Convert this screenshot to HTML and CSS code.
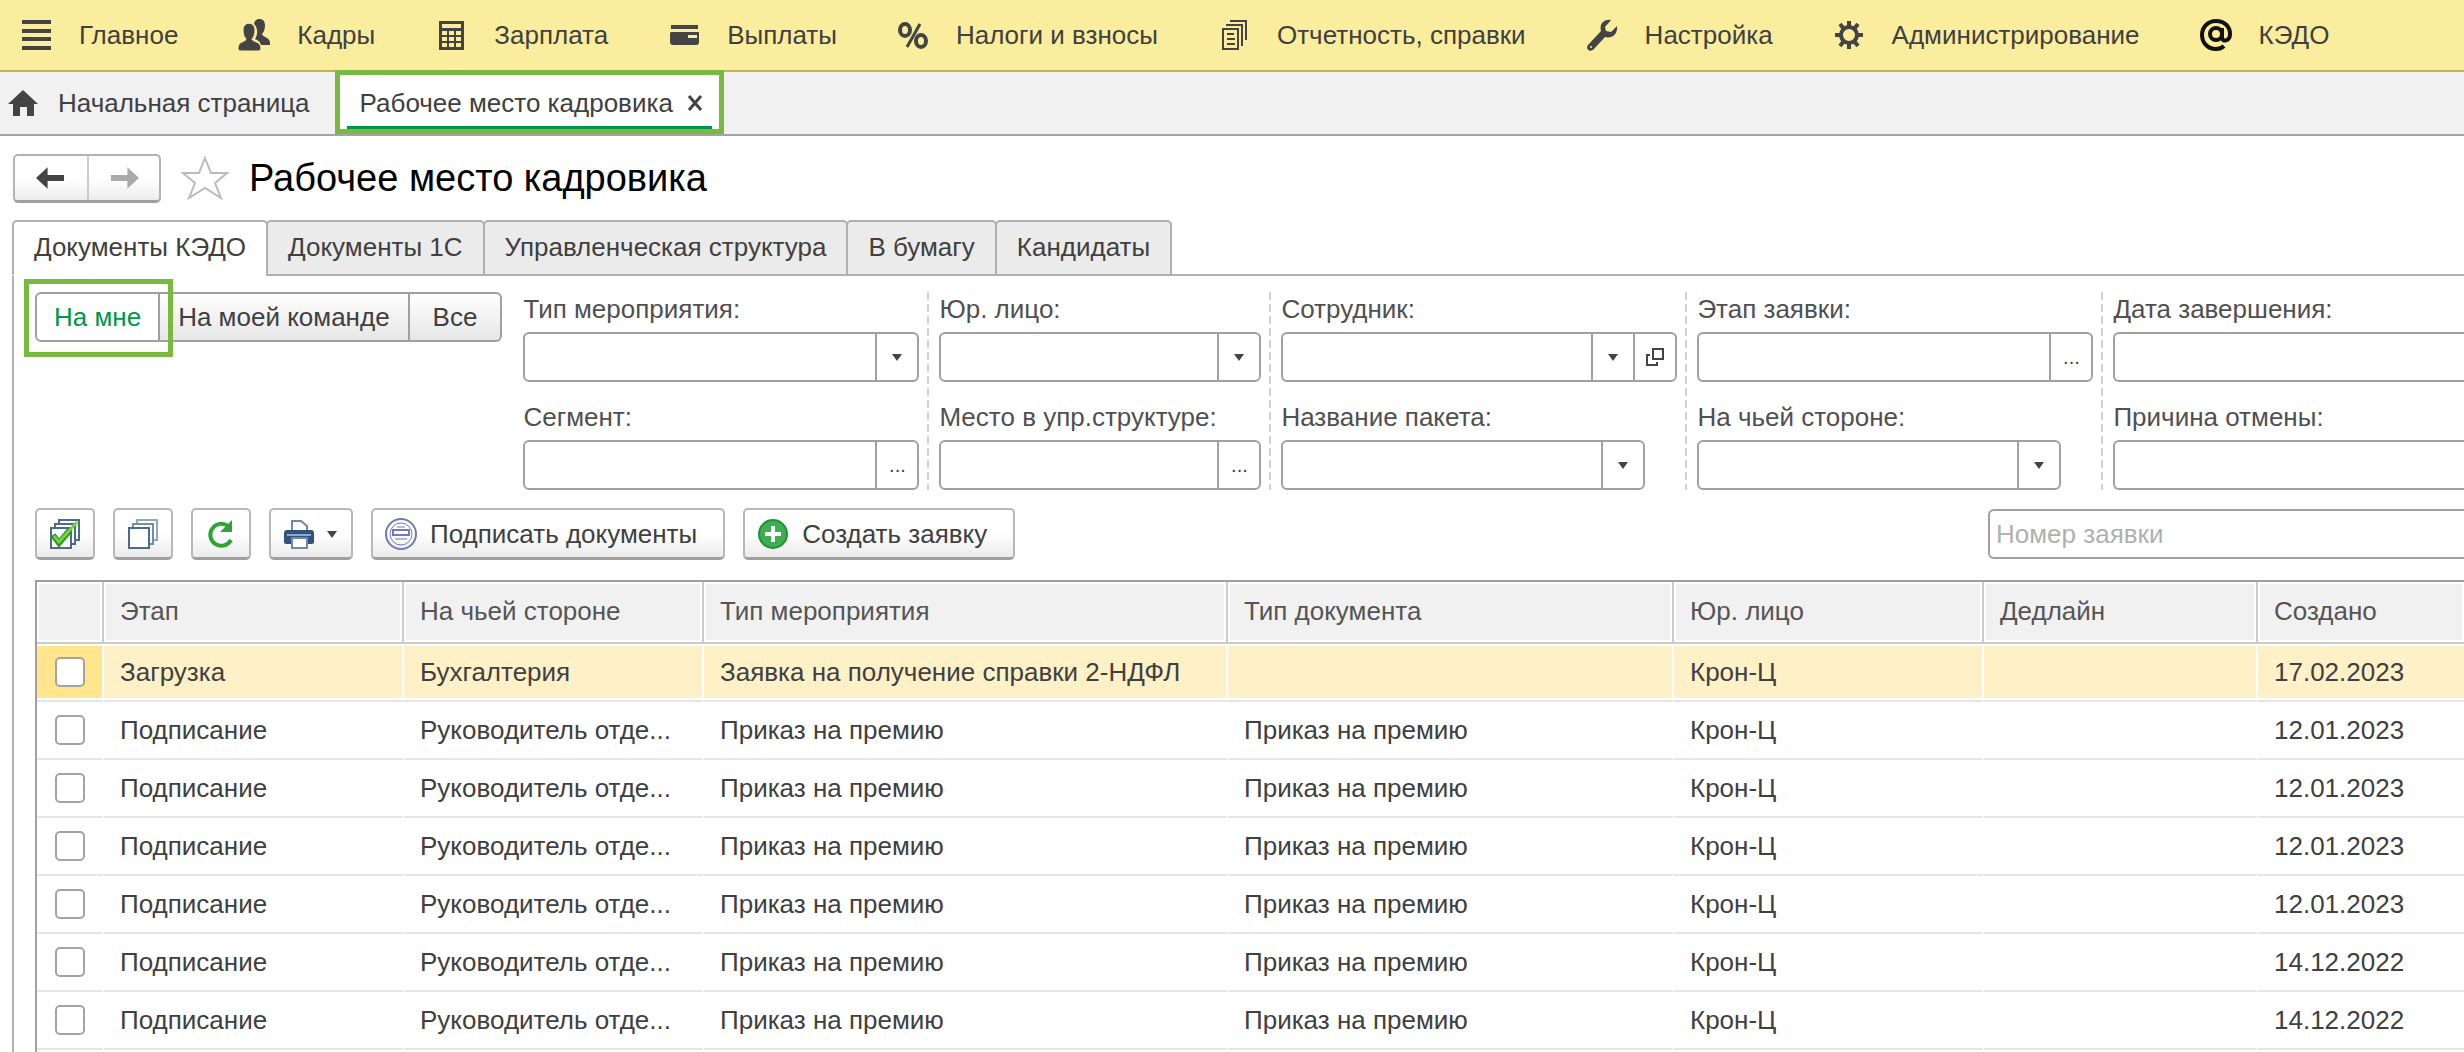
FILE: index.html
```html
<!DOCTYPE html>
<html lang="ru">
<head>
    <meta charset="UTF-8">
    <meta name="viewport" content="width=device-width, initial-scale=1.0">
    <title>Рабочее место кадровика</title>
    <link rel="stylesheet" href="styles.css">
</head>
<body>

<nav class="sections">
    <a href="#main">
        <svg viewBox="0 0 32 32"><path d="M2 3h29M2 12h29M2 20h29M2 29h29" stroke="#444" stroke-width="4"/></svg>
        Главное
    </a>
    <a href="#staff">
        <svg viewBox="0 0 32 32" fill="#444"><path d="M16 5c1-7 11-7 11 1 0 4-1 7-3 9 0 3 8 3 8 9v2h-9c-1-4-4-5-6-6 2-3 4-10-1-15z"/><path d="M5 11c0-9 12-9 12 0 0 4-1 7-3 9 0 3 9 2 9 9 0 2-1 3-3 3H3c-2 0-3-1-3-3 0-7 8-6 8-9-2-2-3-5-3-9z" stroke="#fbed9e"/></svg>
        Кадры
    </a>
    <a href="#salary">
        <svg viewBox="0 0 32 32"><path d="M4 2h25v29H4z" fill="#444"/><path d="M7 5h19v4H7zM7 12h5v4H7zM14 12h5v4h-5zM21 12h5v4h-5zM7 18h5v4H7zM14 18h5v4h-5zM21 18h5v4h-5zM7 24h5v4H7zM14 24h5v4h-5zM21 24h5v4h-5z" fill="#fbed9e"/></svg>
        Зарплата
    </a>
    <a href="#payments">
        <svg viewBox="0 0 32 32"><path d="M3 6h27v4H3zM3 13h28v10c0 2-1 3-3 3H5c-2 0-3-1-3-3v-9z" fill="#444"/><path d="M20 16h9v3h-9z" fill="#fbed9e"/></svg>
        Выплаты
    </a>
    <a href="#taxes">
        <svg viewBox="0 0 32 32" fill="none" stroke="#444"><ellipse cx="8" cy="11" rx="5" ry="6" stroke-width="4"/><ellipse cx="24" cy="22" rx="5" ry="6" stroke-width="4"/><path d="M23 5L10 28" stroke-width="3"/></svg>
        Налоги и взносы
    </a>
    <a href="#reports">
        <svg viewBox="0 0 32 32" fill="none" stroke="#444" stroke-width="2"><path d="M5 10h15v20H5zM8 6h16v21M12 2h16v19"/><path d="M9 15h4M9 20h8M9 25h8M9 15h7"/></svg>
        Отчетность, справки
    </a>
    <a href="#settings">
        <svg viewBox="0 0 32 32"><path d="M25 1c-7-1-12 4-10 11L2 26c-3 4 2 8 6 4l11-12c7 2 13-3 12-11l-6 6-5-1-1-4z" fill="#444"/><circle cx="5" cy="28" r="1" fill="#fbed9e"/></svg>
        Настройка
    </a>
    <a href="#admin">
        <svg viewBox="0 0 32 32" fill="none" stroke="#444"><circle cx="16" cy="16" r="8" stroke-width="4"/><path d="M16 2v6M16 24v6M2 16h6M24 16h6M7 5l4 5M25 5l-4 5M7 27l4-5M25 27l-4-5" stroke-width="4"/></svg>
        Администрирование
    </a>
    <a href="#kedo">
        <svg viewBox="0 0 32 32" fill="none" stroke="#111" stroke-width="4"><circle cx="16" cy="15" r="6"/><path d="M22 9v9c0 6 8 4 8-3C30 7 24 2 16 2S2 8 2 16s6 14 14 14c3 0 6-1 8-3"/></svg>
        КЭДО
    </a>
</nav>

<div class="windows">
    <a class="window-tab" href="#home">
        <svg class="home" viewBox="0 0 30 26"><path d="M15 0l15 14h-4v12h-7v-9h-7v9H5V14H0z" fill="#444"/></svg>
        Начальная страница
    </a>
    <div class="window-tab current">
        <span>Рабочее место кадровика</span>
        <button class="close" aria-label="Закрыть">
            <svg viewBox="0 0 16 16"><path d="M2 1l12 14M14 1L2 15" stroke="#444" stroke-width="3"/></svg>
        </button>
    </div>
</div>

<header class="title-bar">
    <div class="history">
        <button aria-label="Назад"><svg viewBox="0 0 30 22"><path d="M0 11L12 0v8h17v6H12v8z" fill="#444"/></svg></button>
        <button aria-label="Вперед"><svg viewBox="0 0 30 22"><path d="M30 11L18 0v8H1v6h17v8z" fill="#aaa"/></svg></button>
    </div>
    <button class="favorite" aria-label="Избранное">
        <svg viewBox="0 0 48 44"><path d="M24 2l6 15h16L34 27l6 15-16-10-16 10 6-15L2 17h16z" fill="#fff" stroke="#bbb" stroke-width="2"/></svg>
    </button>
    <h1>Рабочее место кадровика</h1>
</header>

<div class="page-tabs">
    <button class="active">Документы КЭДО</button>
    <button>Документы 1С</button>
    <button>Управленческая структура</button>
    <button>В бумагу</button>
    <button>Кандидаты</button>
</div>

<main class="panel">
    <div class="filters">
        <div class="switch">
            <button class="on">На мне</button>
            <button>На моей команде</button>
            <button>Все</button>
        </div>

        <div class="filter-col">
            <label for="event-type">Тип мероприятия:</label>
            <div class="field">
                <select id="event-type"><option></option></select>
                <span class="arrow"></span>
            </div>
            <label for="segment">Сегмент:</label>
            <div class="field">
                <input id="segment" type="text">
                <button aria-label="Выбрать сегмент">...</button>
            </div>
        </div>

        <div class="filter-col narrow">
            <label for="company">Юр. лицо:</label>
            <div class="field">
                <select id="company"><option></option></select>
                <span class="arrow"></span>
            </div>
            <label for="place">Место в упр.структуре:</label>
            <div class="field">
                <input id="place" type="text">
                <button aria-label="Выбрать место">...</button>
            </div>
        </div>

        <div class="filter-col">
            <label for="employee">Сотрудник:</label>
            <div class="field">
                <select id="employee"><option></option></select>
                <span class="arrow"></span>
                <button aria-label="Открыть сотрудника">
                    <svg class="open" viewBox="0 0 20 20" fill="none" stroke="#444" stroke-width="2"><path d="M8 2h10v10H8zM5 8H2v10h10v-3"/></svg>
                </button>
            </div>
            <label for="package">Название пакета:</label>
            <div class="field short">
                <select id="package"><option></option></select>
                <span class="arrow"></span>
            </div>
        </div>

        <div class="filter-col">
            <label for="stage">Этап заявки:</label>
            <div class="field">
                <input id="stage" type="text">
                <button aria-label="Выбрать этап">...</button>
            </div>
            <label for="side">На чьей стороне:</label>
            <div class="field short">
                <select id="side"><option></option></select>
                <span class="arrow"></span>
            </div>
        </div>

        <div class="filter-col last">
            <label for="end-date">Дата завершения:</label>
            <div class="field"><input id="end-date" type="text"></div>
            <label for="reason">Причина отмены:</label>
            <div class="field"><input id="reason" type="text"></div>
        </div>
    </div>

    <div class="toolbar">
        <button class="icon-btn" aria-label="Отметить все">
            <svg viewBox="0 0 32 32" fill="#fff" stroke="#4b6a8c" stroke-width="2"><path d="M10 2h20v20H10z"/><path d="M6 6h20v20H6z"/><path d="M2 10h20v20H2z"/><path d="M4 17l6 8L21 12" fill="none" stroke="#2f9426" stroke-width="6"/><path d="M5 18l5 6L28 4" fill="none" stroke="#74d43c" stroke-width="3"/></svg>
        </button>
        <button class="icon-btn" aria-label="Снять отметки">
            <svg viewBox="0 0 32 32" fill="#fff" stroke="#4b6a8c" stroke-width="2"><path d="M10 2h20v20H10z" stroke="#8fa9bd"/><path d="M6 6h20v20H6z" stroke="#6f8eaa"/><path d="M2 10h20v20H2z"/></svg>
        </button>
        <button class="icon-btn" aria-label="Обновить">
            <svg viewBox="0 0 32 32"><path d="M26 22A11 11 0 1 1 23 8" fill="none" stroke="#2fa336" stroke-width="4"/><path d="M27 2v12H15z" fill="#2fa336"/></svg>
        </button>
        <button class="print" aria-label="Печать">
            <svg viewBox="0 0 32 32"><path d="M9 3h9l6 5v8H9z" fill="#fff" stroke="#7088a5" stroke-width="2"/><path d="M4 12h24c2 0 3 1 3 3v9c0 1-1 2-2 2H3c-1 0-2-1-2-2v-9c0-2 1-3 3-3z" fill="#31517f"/><path d="M4 17h24" stroke="#8fabcc" stroke-width="2"/><path d="M9 20h15v10H9z" fill="#fff" stroke="#7088a5" stroke-width="2"/></svg>
            <span class="arrow"></span>
        </button>
        <button class="sign">
            <svg viewBox="0 0 32 32" fill="none" stroke="#7079b9"><circle cx="16" cy="16" r="15" stroke-width="2"/><circle cx="16" cy="16" r="11"/><path d="M8 12h16v5H8z" fill="#fff" stroke-width="2"/><path d="M10 21h12M12 9h8"/></svg>
            Подписать документы
        </button>
        <button class="create">
            <svg viewBox="0 0 32 32"><circle cx="16" cy="16" r="14" fill="#3fae52" stroke="#23903a" stroke-width="2"/><path d="M16 8v16M8 16h16" stroke="#fff" stroke-width="4"/></svg>
            Создать заявку
        </button>
        <input class="search" type="text" placeholder="Номер заявки" aria-label="Номер заявки">
    </div>

    <div class="list">
        <table>
            <colgroup>
                <col class="c-check"><col class="c-mid"><col class="c-mid"><col class="c-event">
                <col class="c-doc"><col class="c-company"><col class="c-deadline"><col>
            </colgroup>
            <thead>
                <tr><th></th><th>Этап</th><th>На чьей стороне</th><th>Тип мероприятия</th><th>Тип документа</th><th>Юр. лицо</th><th>Дедлайн</th><th>Создано</th></tr>
            </thead>
            <tbody>
                <tr class="selected"><td><input type="checkbox" aria-label="Заявка 1"></td><td>Загрузка</td><td>Бухгалтерия</td><td>Заявка на получение справки 2-НДФЛ</td><td></td><td>Крон-Ц</td><td></td><td>17.02.2023</td></tr>
                <tr><td><input type="checkbox" aria-label="Заявка 2"></td><td>Подписание</td><td>Руководитель отде...</td><td>Приказ на премию</td><td>Приказ на премию</td><td>Крон-Ц</td><td></td><td>12.01.2023</td></tr>
                <tr><td><input type="checkbox" aria-label="Заявка 3"></td><td>Подписание</td><td>Руководитель отде...</td><td>Приказ на премию</td><td>Приказ на премию</td><td>Крон-Ц</td><td></td><td>12.01.2023</td></tr>
                <tr><td><input type="checkbox" aria-label="Заявка 4"></td><td>Подписание</td><td>Руководитель отде...</td><td>Приказ на премию</td><td>Приказ на премию</td><td>Крон-Ц</td><td></td><td>12.01.2023</td></tr>
                <tr><td><input type="checkbox" aria-label="Заявка 5"></td><td>Подписание</td><td>Руководитель отде...</td><td>Приказ на премию</td><td>Приказ на премию</td><td>Крон-Ц</td><td></td><td>12.01.2023</td></tr>
                <tr><td><input type="checkbox" aria-label="Заявка 6"></td><td>Подписание</td><td>Руководитель отде...</td><td>Приказ на премию</td><td>Приказ на премию</td><td>Крон-Ц</td><td></td><td>14.12.2022</td></tr>
                <tr><td><input type="checkbox" aria-label="Заявка 7"></td><td>Подписание</td><td>Руководитель отде...</td><td>Приказ на премию</td><td>Приказ на премию</td><td>Крон-Ц</td><td></td><td>14.12.2022</td></tr>
            </tbody>
        </table>
    </div>
</main>

</body>
</html>
```
FILE: styles.css
```css
*, *::before, *::after {
    box-sizing: border-box;
}
body {
    display: flex;
    flex-direction: column;
    height: 100vh;
    margin: 0;
    overflow: hidden;
    background: #fff;
    color: #404040;
    font-family: "Liberation Sans", Arial, sans-serif;
    font-size: 26px;
    line-height: 30px;
}
button, input, select {
    margin: 0;
    font: inherit;
    color: inherit;
}
button {
    cursor: pointer;
    white-space: nowrap;
}
a {
    color: inherit;
    text-decoration: none;
    white-space: nowrap;
}
svg {
    display: block;
    flex: none;
}

/* sections */
.sections {
    display: flex;
    flex: none;
    gap: 60px;
    height: 72px;
    padding: 0 20px;
    background: #fbed9e;
    border-bottom: 2px solid #c4b15c;
}
.sections a {
    display: flex;
    align-items: center;
    gap: 27px;
}
.sections svg {
    width: 32px;
    height: 32px;
}

/* open windows */
.windows {
    display: flex;
    flex: none;
    height: 64px;
    background: #f1f1f1;
    border-bottom: 2px solid #a3a3a3;
}
.window-tab {
    display: flex;
    align-items: center;
    padding: 0 30px 0 8px;
}
.home {
    width: 30px;
    height: 26px;
    margin-right: 20px;
}
.current {
    position: relative;
    gap: 14px;
    padding: 0 16px 0 20px;
    background: #fff;
}
.current::before {
    content: "";
    position: absolute;
    inset: -2px -5px 0;
    border: 5px solid #7ab93f;
}
.current::after {
    content: "";
    position: absolute;
    left: 7px;
    right: 7px;
    bottom: 5px;
    height: 3px;
    background: #009646;
}
.close {
    padding: 0;
    border: none;
    background: none;
}
.close svg {
    width: 16px;
    height: 16px;
}

/* title */
.title-bar {
    display: flex;
    flex: none;
    align-items: center;
    height: 84px;
    padding: 0 13px;
}
.history {
    display: flex;
    height: 49px;
    border: 2px solid #b3b3b3;
    border-bottom: 3px solid #a0a0a0;
    border-radius: 5px;
    background: linear-gradient(#fff 50%, #ededed);
}
.history button {
    width: 72px;
    padding: 0 21px;
    border: none;
    background: none;
}
.history button + button {
    border-left: 2px solid #ccc;
}
.history svg {
    width: 29px;
    height: 22px;
}
.favorite {
    margin: 0 20px;
    padding: 0;
    border: none;
    background: none;
}
.favorite svg {
    width: 48px;
    height: 44px;
}
h1 {
    margin: 0;
    color: #000;
    font-size: 38px;
    font-weight: normal;
}

/* page tabs */
.page-tabs {
    display: flex;
    flex: none;
    height: 56px;
    padding-left: 12px;
    background: linear-gradient(#b0b0b0, #b0b0b0) 12px bottom / 100% 2px no-repeat;
}
.page-tabs button {
    margin-left: -2px;
    padding: 0 20px 3px;
    border: 2px solid #b0b0b0;
    border-radius: 5px 5px 0 0;
    background: #ebebeb;
}
.page-tabs .active {
    margin-left: 0;
    border-bottom-color: #fff;
    background: #fff;
}

/* panel */
.panel {
    display: flex;
    flex: 1;
    flex-direction: column;
    margin-left: 12px;
    padding-left: 21px;
    border-left: 2px solid #b0b0b0;
}
.filters {
    display: flex;
    flex: none;
    padding-top: 16px;
}
.switch {
    display: flex;
    flex: none;
    position: relative;
    align-self: flex-start;
    height: 50px;
    margin-right: 11px;
}
.switch::before {
    content: "";
    position: absolute;
    left: -11px;
    top: -13px;
    width: 149px;
    height: 78px;
    border: 5px solid #7ab93f;
}
.switch button {
    margin-left: -2px;
    padding: 0 18px;
    border: 2px solid #a0a0a0;
    background: linear-gradient(#fff, #e6e6e6);
}
.switch button:first-child {
    margin-left: 0;
    padding: 0 17px;
    border-radius: 6px 0 0 6px;
}
.switch button:last-child {
    padding: 0 23px;
    border-radius: 0 6px 6px 0;
}
.switch .on {
    color: #009646;
    background: #fff;
}
.filter-col {
    display: flex;
    flex: none;
    flex-direction: column;
    width: 416px;
    padding: 0 10px;
    background: repeating-linear-gradient(#d0d0d0 0 8px, #fff 8px 12px) right top / 2px 100% no-repeat;
}
.narrow {
    width: 342px;
}
.filter-col label {
    height: 40px;
    padding-top: 2px;
    color: #505050;
}
.filter-col .field + label {
    height: 58px;
    padding-top: 20px;
}
.last {
    flex: 1;
    padding-right: 0;
    background: none;
}
.last .field {
    border-right: none;
    border-radius: 6px 0 0 6px;
}
.field {
    display: flex;
    height: 50px;
    border: 2px solid #a0a0a0;
    border-radius: 6px;
    background: #fff;
    overflow: hidden;
}
.short {
    margin-right: 32px;
}
.field input, .field select {
    flex: 1;
    min-width: 0;
    padding: 0 8px;
    border: none;
    background: none;
    appearance: none;
}
.field select {
    margin-right: -42px;
}
.field .arrow, .field button {
    flex: none;
    width: 42px;
    padding: 0;
    border: none;
    border-left: 2px solid #a0a0a0;
    background: none;
    font-size: 20px;
}
.arrow, .field button {
    display: flex;
    align-items: center;
    justify-content: center;
}
.arrow {
    pointer-events: none;
}
.arrow::after {
    content: "";
    border: 5px solid transparent;
    border-top: 7px solid #444;
    border-bottom: none;
}
.open {
    width: 20px;
    height: 20px;
}

/* toolbar */
.toolbar {
    display: flex;
    flex: none;
    gap: 18px;
    padding: 18px 0 20px;
}
.toolbar button {
    display: flex;
    align-items: center;
    height: 52px;
    padding: 1px 12px 0;
    border: 2px solid #b8b8b8;
    border-bottom: 3px solid #a0a0a0;
    border-radius: 5px;
    background: linear-gradient(#fff 50%, #ebebeb);
}
.toolbar svg {
    width: 32px;
    height: 32px;
}
.toolbar .icon-btn {
    width: 60px;
}
.toolbar .print {
    width: 84px;
    gap: 12px;
}
.toolbar .sign, .toolbar .create {
    gap: 13px;
    padding-right: 26px;
}
.search {
    width: 476px;
    height: 50px;
    margin: 1px 0 0 auto;
    padding: 1px 6px 0;
    border: 2px solid #a0a0a0;
    border-right: none;
    border-radius: 6px 0 0 6px;
}
.search::placeholder {
    color: #b0b0b0;
}

/* list */
.list {
    flex: 1;
    border-top: 2px solid #a0a0a0;
    border-left: 2px solid #a0a0a0;
}
table {
    width: 100%;
    table-layout: fixed;
    border-collapse: separate;
    border-spacing: 0;
}
.c-check { width: 67px; }
.c-mid { width: 300px; }
.c-event { width: 524px; }
.c-doc { width: 446px; }
.c-company { width: 310px; }
.c-deadline { width: 274px; }
th, td {
    height: 58px;
    padding: 0 16px;
    border-right: 2px solid #fff;
    border-bottom: 2px solid #e6e6e6;
    text-align: left;
    font-weight: normal;
    white-space: nowrap;
}
th {
    height: 62px;
    padding-bottom: 2px;
    border-color: #ccc;
    background: #f1f1f1;
    box-shadow: inset 0 0 0 2px #fff;
    color: #555;
}
th:last-child, td:last-child {
    border-right: none;
}
.selected td {
    background: #fff1c7;
    box-shadow: inset 0 2px #fff, inset 0 -2px #fff;
}
.selected td:first-child {
    background: #ffe68c;
}
td input {
    display: block;
    width: 30px;
    height: 30px;
    margin: 0 auto;
    border: 2px solid #a3a3a3;
    border-radius: 5px;
    background: #fff;
    appearance: none;
}
```
